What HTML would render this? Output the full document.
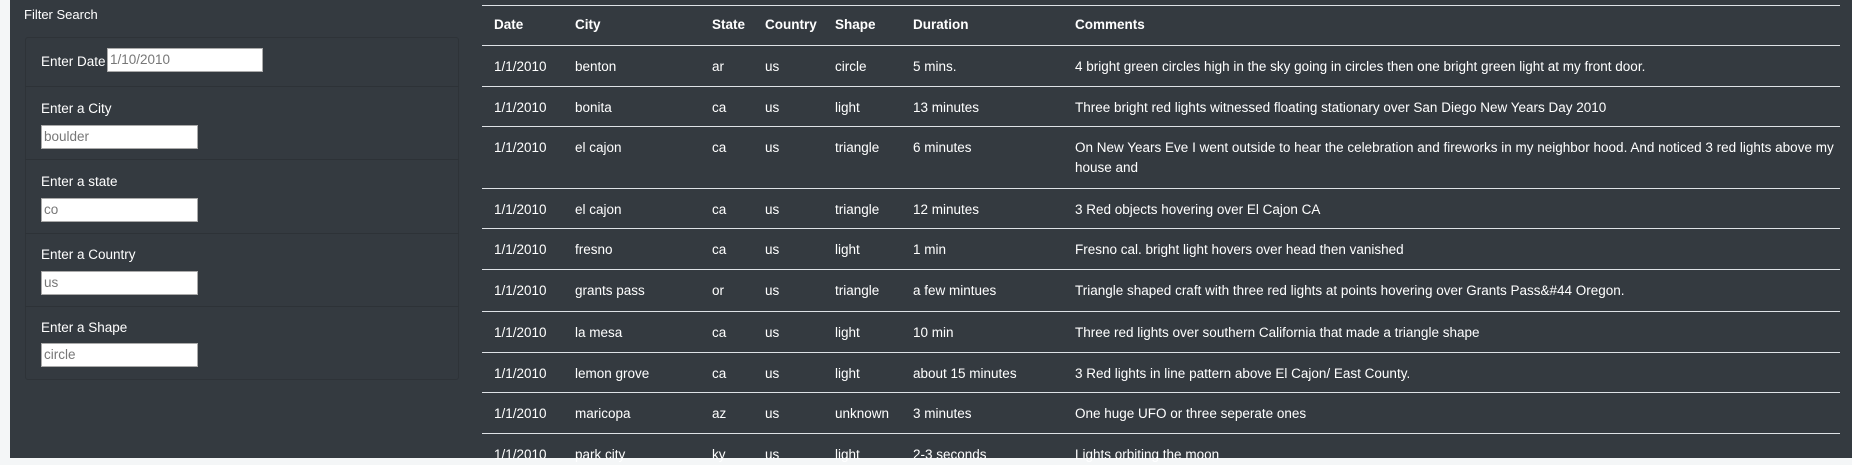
<!DOCTYPE html><html><head><style>
body{margin:0;width:1852px;height:462px;overflow:hidden;background:#f4f6f7;font-family:"Liberation Sans",sans-serif;color:#fff;font-size:13.5px}
#m{position:absolute;left:10px;top:0;width:1842px;height:458px;background:#343a40}
.a{position:absolute;white-space:nowrap}
.card{position:absolute;left:25px;top:37px;width:432px;height:341px;border:1px solid #2e3338;border-radius:3px}
.sep{position:absolute;left:25px;width:434px;height:1px;background:#2d3237}
.in{position:absolute;background:#fff;border:1px solid #aaa;color:#777;font-size:13.5px;line-height:21px;padding-left:2px;box-sizing:border-box;height:24px}
.hl{position:absolute;left:482px;width:1358px;height:1px;background:#dee2e6}
b{font-weight:bold}
</style></head><body><div id="m"></div>
<div class="a" style="left:24px;top:7px;font-size:13px">Filter Search</div>
<div class="card"></div>
<div class="sep" style="top:86px"></div><div class="sep" style="top:159px"></div><div class="sep" style="top:233px"></div><div class="sep" style="top:306px"></div>
<div class="a" style="left:41px;top:54px">Enter Date</div><div class="in" style="left:107px;top:48px;width:156px">1/10/2010</div>
<div class="a" style="left:41px;top:101px">Enter a City</div><div class="in" style="left:41px;top:125px;width:157px">boulder</div>
<div class="a" style="left:41px;top:174px">Enter a state</div><div class="in" style="left:41px;top:198px;width:157px">co</div>
<div class="a" style="left:41px;top:247px">Enter a Country</div><div class="in" style="left:41px;top:271px;width:157px">us</div>
<div class="a" style="left:41px;top:320px">Enter a Shape</div><div class="in" style="left:41px;top:343px;width:157px">circle</div>
<div class="hl" style="top:5px"></div>
<div id="t"></div>
<script>
var cols=[494,575,712,765,835,913,1075];
var h=["Date","City","State","Country","Shape","Duration","Comments"];
var s='';h.forEach((x,i)=>s+='<div class="a" style="left:'+cols[i]+'px;top:17px"><b>'+x+'</b></div>');
var rows=[
["benton","ar","circle","5 mins.","4 bright green circles high in the sky going in circles then one bright green light at my front door."],
["bonita","ca","light","13 minutes","Three bright red lights witnessed floating stationary over San Diego New Years Day 2010"],
["el cajon","ca","triangle","6 minutes","On New Years Eve I went outside to hear the celebration and fireworks in my neighbor hood. And noticed 3 red lights above my<br>house and"],
["el cajon","ca","triangle","12 minutes","3 Red objects hovering over El Cajon CA"],
["fresno","ca","light","1 min","Fresno cal. bright light hovers over head then vanished"],
["grants pass","or","triangle","a few mintues","Triangle shaped craft with three red lights at points hovering over Grants Pass&amp;#44 Oregon."],
["la mesa","ca","light","10 min","Three red lights over southern California that made a triangle shape"],
["lemon grove","ca","light","about 15 minutes","3 Red lights in line pattern above El Cajon/ East County."],
["maricopa","az","unknown","3 minutes","One huge UFO or three seperate ones"],
["park city","ky","light","2-3 seconds","Lights orbiting the moon"]];
var tops=[45,86,126,188,228,269,311,352,392,433];
rows.forEach((r,k)=>{var y=tops[k];s+='<div class="hl" style="top:'+y+'px"></div>';
var v=["1/1/2010",r[0],r[1],"us",r[2],r[3],r[4]];
v.forEach((x,i)=>s+='<div class="a" style="left:'+cols[i]+'px;top:'+(y+12)+'px;line-height:20px">'+x+'</div>');});
document.getElementById('t').innerHTML=s;
</script></body></html>
